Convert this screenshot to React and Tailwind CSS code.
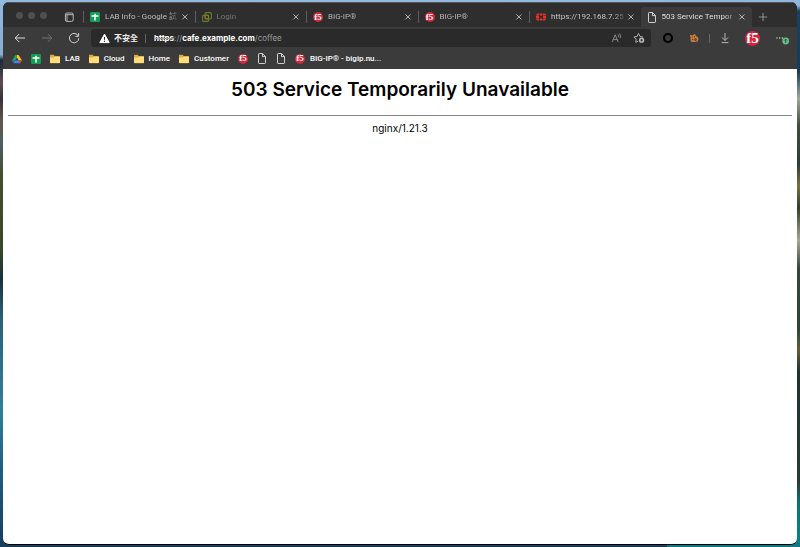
import React from "react";

const font = "font-['Inter','Noto_Sans_CJK_TC',sans-serif]";

function F5({ large }) {
  return (
    <span
      className={
        large
          ? "flex size-[15px] shrink-0 items-center justify-center rounded-full bg-[#dc1f38] font-['Liberation_Serif',serif] text-[15px] font-bold leading-none text-white"
          : "flex size-[10px] shrink-0 items-center justify-center rounded-full bg-[#d3273d] font-['Liberation_Serif',serif] text-[9px] font-bold leading-none text-white"
      }
    >
      f5
    </span>
  );
}

function Sheet() {
  return (
    <svg className="size-[10px] shrink-0" viewBox="0 0 10 10">
      <rect width="10" height="10" rx="1" fill="#159b57" />
      <path d="M1.5 4h7M5 1.8v6.8" stroke="#fff" strokeWidth="1.5" />
    </svg>
  );
}

function Page() {
  return (
    <svg className="h-[11px] w-[10px] shrink-0" viewBox="0 0 10 11" fill="none" stroke="#e0e0e0" strokeWidth=".9">
      <path d="M1.5 1.2Q1.5.5 2.2.5H5.5L8.5 3.6V9.8Q8.5 10.5 7.8 10.5H2.2Q1.5 10.5 1.5 9.8ZM5.5.5V3.6H8.5" />
    </svg>
  );
}

function Folder() {
  return (
    <svg className="h-[10px] w-[10px] shrink-0" viewBox="0 0 10 10">
      <path d="M0 1.2Q0 .7.6.7H3.6L4.8 2H9.4Q10 2 10 2.6V8.6Q10 9.3 9.3 9.3H.7Q0 9.3 0 8.6Z" fill="#e0a93c" />
      <path d="M0 3.6H3.9L5 2.7H10V8.5Q10 9.1 9.4 9.1H.6Q0 9.1 0 8.5Z" fill="#ffdc7c" />
    </svg>
  );
}

function Drive() {
  return (
    <svg className="size-[10px] shrink-0" viewBox="0 0 10 10">
      <path d="M3.4.9H5L5 3.6 1.7 9.2 0 6.4Z" fill="#21a464" />
      <path d="M5 .9H6.6L10 6.4H6.7L5 3.6Z" fill="#fbc11e" />
      <path d="M0 6.4H3.4L1.7 9.2Z" fill="#2261d1" />
      <path d="M3.4 6.4H6.7L8.3 9.2H1.7Z" fill="#4285f4" />
      <path d="M6.7 6.4H10L8.3 9.2Z" fill="#e94235" />
    </svg>
  );
}

function VCenter() {
  return (
    <svg className="size-[10px] shrink-0" viewBox="0 0 10 10" fill="none" strokeWidth="1.1">
      <rect x="3" y=".6" width="6.4" height="6.4" rx="1.2" stroke="#5d862b" />
      <rect x=".6" y="3.4" width="6" height="6" rx="1.2" stroke="#5d862b" />
      <rect x="3.3" y="3.4" width="3.2" height="3.2" rx=".5" stroke="#a66c24" />
    </svg>
  );
}

function Fortinet() {
  return (
    <svg className="size-[10px] shrink-0" viewBox="0 0 10 10">
      <path
        fill="#ee3124"
        d="M1.4 1.5H3V3.5H0Q0 1.9 1.4 1.5ZM3.7 1.5H6.3V3.5H3.7ZM7 1.5H8.6Q10 1.9 10 3.5H7ZM0 4.1H3V5.9H0ZM7 4.1H10V5.9H7ZM0 6.5H3V8.5H1.4Q0 8.1 0 6.5ZM3.7 6.5H6.3V8.5H3.7ZM7 6.5H10Q10 8.1 8.6 8.5H7Z"
      />
    </svg>
  );
}

const tabs = [
  { title: "LAB Info - Google 試", icon: <Sheet />, tone: "text-[#bdbdbd]" },
  { title: "Login", icon: <VCenter />, tone: "text-[#767676]" },
  { title: "BIG-IP®", icon: <F5 />, tone: "text-[#b4b4b4]" },
  { title: "BIG-IP®", icon: <F5 />, tone: "text-[#b4b4b4]" },
  { title: "https://192.168.7.25", icon: <Fortinet />, tone: "text-[#c4c4c4]" },
  { title: "503 Service Tempor", icon: <Page />, tone: "text-[#dedede]", active: true },
];

function Tab({ tab }) {
  return (
    <div
      className={
        tab.active
          ? "flex h-[20px] min-w-0 items-center rounded-t-[3px] bg-[#3b3b3b] pl-[6px] pr-[6px]"
          : "flex h-[20px] min-w-0 items-center pr-[6px]"
      }
    >
      {!tab.active && <span className="mr-[6px] h-[12px] w-px shrink-0 bg-[#5c5c5c]" />}
      <button className="flex min-w-0 flex-1 items-center gap-[5px]">
        {tab.icon}
        <span
          className={`min-w-0 flex-1 overflow-hidden whitespace-nowrap text-left font-['Roboto','Noto_Sans_CJK_TC',sans-serif] text-[8px] leading-[12px] [mask-image:linear-gradient(to_right,black_82%,transparent)] ${tab.tone}`}
        >
          {tab.title}
        </span>
      </button>
      <button aria-label="Close tab" className="shrink-0">
        <svg className="size-[8px]" viewBox="0 0 8 8" stroke="#c6c6c6" strokeWidth=".9">
          <path d="M1.4 1.4 6.4 6.4M6.4 1.4 1.4 6.4" />
        </svg>
      </button>
    </div>
  );
}

function IconButton({ label, children }) {
  return (
    <button aria-label={label} className="flex size-[12px] shrink-0 items-center justify-center">
      {children}
    </button>
  );
}

function Bookmark({ icon, children }) {
  return (
    <a href="#" className="flex shrink-0 items-center gap-[5px]">
      {icon}
      {children && <span>{children}</span>}
    </a>
  );
}

export default function App() {
  return (
    <div className={`grid min-h-screen bg-[#9dbdde] ${font}`}>
      <div className="grid grid-cols-[5fr_1fr] [grid-area:1/1]">
        <div className="bg-[linear-gradient(to_bottom,#94b9df_0%,#86acd0_10%,#182836_11%,#604b50_15%,#37313a_18%,#65534a_22%,#4c6063_26%,#454d2d_32%,#394929_45%,#17333a_51%,#286178_58%,#347e9c_75%,#1e5c86_86%,#163e5c_100%)]" />
        <div className="bg-[linear-gradient(to_bottom,#91b7df_0%,#91b7df_1%,#1c4160_2%,#153b57_13%,#a0a79a_18%,#404b3d_23%,#293f32_30%,#73713e_34%,#303f2c_38%,#a6a88e_44%,#35463c_49%,#2d4439_60%,#625e38_64%,#1c332f_68%,#293a35_88%,#087475_92%,#078386_98%,#0a7a86_100%)]" />
      </div>
      <div className="mx-[3px] mt-[2px] mb-[2px] flex min-w-0 flex-col overflow-hidden rounded-[6px] border-b border-black bg-white [grid-area:1/1]">
        <header className="bg-[#3b3b3b] text-[#ededed]">
          <div className="flex h-[25px] items-end border-t border-[#555] bg-[#2e2e2e]">
            <div className="flex h-[20px] w-[80px] shrink-0 items-center pl-[13px]">
              <div className="flex gap-[5px] pb-[4px]">
                <button aria-label="Close window" className="size-[7px] rounded-full bg-[#505050]" />
                <button aria-label="Minimize window" className="size-[7px] rounded-full bg-[#505050]" />
                <button aria-label="Zoom window" className="size-[7px] rounded-full bg-[#505050]" />
              </div>
              <button aria-label="Tab actions" className="ml-[17px]">
                <svg className="size-[10px]" viewBox="0 0 10 10" fill="none" stroke="#c4c4c4" strokeWidth=".9">
                  <rect x="1.4" y="1" width="7.8" height="8.4" rx="1.4" />
                  <path d="M1.4 2.7H9.2M3 2.7V9.4" />
                </svg>
              </button>
            </div>
            <div className="grid min-w-0 flex-1 auto-cols-fr grid-flow-col">
              {tabs.map((tab, i) => (
                <Tab key={i} tab={tab} />
              ))}
            </div>
            <div className="flex h-[20px] w-[45px] shrink-0 items-center pl-[6px]">
              <button aria-label="New tab">
                <svg className="size-[10px]" viewBox="0 0 10 10" stroke="#a8a8a8" strokeWidth=".8">
                  <path d="M5 .8V9.2M.8 5H9.2" />
                </svg>
              </button>
            </div>
          </div>

          <div className="flex h-[22px] items-center pl-[11px] pr-[7px]">
            <div className="flex gap-[15px]">
              <IconButton label="Back">
                <svg className="size-[12px]" viewBox="0 0 12 12" fill="none" stroke="#dadada" strokeWidth="1">
                  <path d="M11 6H1.4M5.2 2 1.2 6 5.2 10" />
                </svg>
              </IconButton>
              <IconButton label="Forward">
                <svg className="size-[12px]" viewBox="0 0 12 12" fill="none" stroke="#727272" strokeWidth="1">
                  <path d="M1 6H10.6M6.8 2 10.8 6 6.8 10" />
                </svg>
              </IconButton>
              <IconButton label="Reload">
                <svg className="size-[12px]" viewBox="0 0 12 12" fill="none" stroke="#d0d0d0" strokeWidth="1">
                  <path d="M10.4 4.2A4.7 4.7 0 1 0 10.8 6.2M10.6 1V4.3H7.3" />
                </svg>
              </IconButton>
            </div>

            <form
              onSubmit={(e) => e.preventDefault()}
              className="ml-[11px] flex h-[18px] min-w-0 flex-1 items-center rounded-[3px] bg-[#2a2a2a] pl-[8px] pr-[6px] text-[8px] leading-[12px]"
            >
              <button type="button" className="flex shrink-0 items-center gap-[4px] font-bold">
                <svg className="size-[11px]" viewBox="0 0 11 11">
                  <path d="M5.5 1.2 10.2 9.6H.8Z" fill="#fff" stroke="#fff" strokeLinejoin="round" />
                  <path d="M5.5 4V6.8M5.5 7.7V8.9" stroke="#2a2a2a" strokeWidth="1" />
                </svg>
                不安全
              </button>
              <span className="mx-[7px] h-[9px] w-px shrink-0 bg-[#626262]" />
              <label htmlFor="address" className="ml-px shrink-0 font-bold text-white">
                <span className="line-through decoration-[#9b9b9b]">https</span>
                <span className="font-normal text-[#9b9b9b]">://</span>cafe.example.com
              </label>
              <input
                id="address"
                defaultValue="/coffee"
                className="min-w-0 flex-1 bg-transparent text-[#9b9b9b] outline-none"
              />
              <div className="flex shrink-0 gap-[10px]">
                <IconButton label="Read aloud">
                  <svg className="size-[12px]" viewBox="0 0 12 12" fill="none" stroke="#a0a0a0" strokeWidth=".8">
                    <path d="M1.2 10 4.2 2.8 7.2 10M2.2 7.6H6.2M7 2.5Q8.2 3.6 7.5 5.2M8.6 1.5Q10.3 3.6 9.1 6.2" />
                  </svg>
                </IconButton>
                <IconButton label="Add to favorites">
                  <svg className="size-[12px]" viewBox="0 0 12 12" fill="none" stroke="#bcbcbc" strokeWidth=".9">
                    <path d="M5.2 9.1 2.7 10.4 3.2 7.2.9 5 4 4.5 5.5 1.5 7 4.5 10.1 5" strokeLinejoin="round" />
                    <circle cx="8.6" cy="8.2" r="2.6" fill="#bcbcbc" stroke="none" />
                    <path d="M8.6 6.8V9.6M7.2 8.2H10" stroke="#2a2a2a" strokeWidth=".8" />
                  </svg>
                </IconButton>
              </div>
            </form>

            <div className="ml-[11px] flex shrink-0 items-center">
              <IconButton label="Extension">
                <svg className="size-[12px]" viewBox="0 0 12 12" fill="none">
                  <circle cx="6" cy="6" r="4" stroke="#000" strokeWidth="2.2" />
                </svg>
              </IconButton>
              <span className="w-[14px]" />
              <IconButton label="Proxy extension">
                <svg className="size-[10px]" viewBox="0 0 10 10">
                  <path
                    d="M1 2.6 2 1.6 3 2.4 4.2 2.2 5.2 1 6.6 1.8 6.8 3.2Q9.4 3.4 9.4 6 9.4 9 6.6 9H4Q1.4 9 1.5 6.4L1.6 4.2Z"
                    fill="#c58143"
                  />
                  <path
                    d="M2.8 4.2H3.8M5 3.8H6M3 6.6H4.4M5.8 5.8H7.2V7.4H5.8Z"
                    fill="none"
                    stroke="#51341c"
                    strokeWidth=".9"
                  />
                </svg>
              </IconButton>
              <span className="ml-[9px] mr-[9px] h-[9px] w-px bg-[#686868]" />
              <IconButton label="Downloads">
                <svg className="size-[12px]" viewBox="0 0 12 12" fill="none" stroke="#c4c4c4" strokeWidth=".9">
                  <path d="M6 1V8.3M3 5.5 6 8.5 9 5.5M2.6 10.6H9.4" />
                </svg>
              </IconButton>
              <button aria-label="Profile" className="ml-[14px]">
                <F5 large />
              </button>
              <button aria-label="Settings and more" className="ml-[15px]">
                <svg className="h-[14px] w-[15px]" viewBox="0 0 15 14">
                  <circle cx="2" cy="7" r=".7" fill="#ddd" />
                  <circle cx="4.7" cy="7" r=".7" fill="#ddd" />
                  <circle cx="7.4" cy="7" r=".7" fill="#ddd" />
                  <circle cx="10.7" cy="10" r="3.4" fill="#6bbd8b" />
                  <path d="M10.7 12V8.4M9.2 9.6 10.7 8.1 12.2 9.6" fill="none" stroke="#1e3d2b" strokeWidth=".8" />
                </svg>
              </button>
            </div>
          </div>

          <nav className="flex h-[20px] items-center gap-[9px] pb-[1px] pl-[9px] font-['Roboto',sans-serif] text-[8px] font-medium leading-[12px] text-white">
            <Bookmark icon={<Drive />} />
            <Bookmark icon={<Sheet />} />
            <Bookmark icon={<Folder />}>LAB</Bookmark>
            <Bookmark icon={<Folder />}>Cloud</Bookmark>
            <Bookmark icon={<Folder />}>Home</Bookmark>
            <Bookmark icon={<Folder />}>Customer</Bookmark>
            <Bookmark icon={<F5 />} />
            <Bookmark icon={<Page />} />
            <Bookmark icon={<Page />} />
            <Bookmark icon={<F5 />}>BIG-IP® - bigip.nu...</Bookmark>
          </nav>
        </header>

        <main className="px-[5px] pt-[9px] text-center text-black">
          <h1 className="text-[19px] font-semibold leading-[24px]">503 Service Temporarily Unavailable</h1>
          <hr className="mt-[13px] border-t border-[#858585]" />
          <p className="mt-[4px] text-[10px] leading-[16px]">nginx/1.21.3</p>
        </main>
      </div>
    </div>
  );
}
